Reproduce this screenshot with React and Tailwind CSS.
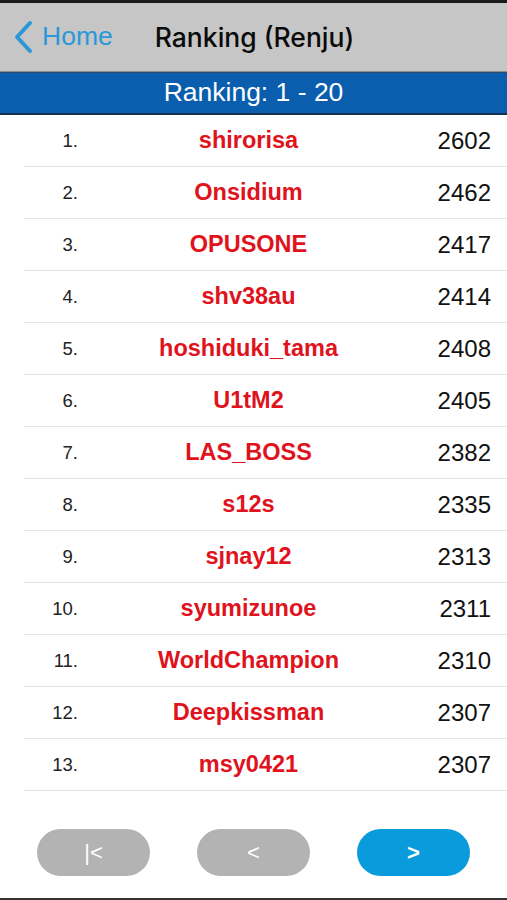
import React from 'react';

const rows = [
  ['1.', 'shirorisa', 2602],
  ['2.', 'Onsidium', 2462],
  ['3.', 'OPUSONE', 2417],
  ['4.', 'shv38au', 2414],
  ['5.', 'hoshiduki_tama', 2408],
  ['6.', 'U1tM2', 2405],
  ['7.', 'LAS_BOSS', 2382],
  ['8.', 's12s', 2335],
  ['9.', 'sjnay12', 2313],
  ['10.', 'syumizunoe', 2311],
  ['11.', 'WorldChampion', 2310],
  ['12.', 'Deepkissman', 2307],
  ['13.', 'msy0421', 2307],
];

const App = () => {
  return (
    <div className="w-[507px] h-[900px] flex flex-col bg-white font-['Liberation_Sans',Arial,sans-serif] overflow-hidden">
      {/* Top bar */}
      <div className="h-[3px] bg-[#1a1a1a]" />
      <div className="h-[69px] bg-[#c6c6c6] border-b border-[#8a8a8a] relative flex items-center justify-center">
        <div className="absolute left-[12px] top-0 h-full flex items-center gap-[6px] text-[#2a98d8]">
          <svg width="24" height="34" viewBox="0 0 24 34">
            <path d="M18 3 L5 17 L18 31" fill="none" stroke="#2a98d8" strokeWidth="4" strokeLinecap="round" strokeLinejoin="round" />
          </svg>
          <span className="text-[26.5px]">Home</span>
        </div>
        <span className="ml-[2px] pt-[1px] text-[26.5px] text-[#0a0a0a] font-medium font-['Inter',sans-serif]">Ranking (Renju)</span>
      </div>

      {/* Page range */}
      <div className="h-[43px] bg-[#0a5ead] border-t border-[#2c4a6a] border-b-2 border-b-[#12304f] flex items-center justify-center">
        <span className="text-white text-[26.5px]">Ranking: 1 - 20</span>
      </div>

      {/* List */}
      <div className="flex flex-col">
        {rows.map(([rank, name, score]) => (
          <div key={rank} className="h-[52px] ml-[24px] border-b border-[#e4e4e4] flex items-center">
            <span className="w-[54px] text-right text-[18.5px] text-[#222]">{rank}</span>
            <span className="flex-1 text-center text-[23.5px] font-bold text-[#e0121c]">{name}</span>
            <span className="w-[88px] pr-[16px] text-right text-[24px] text-[#111]">{score}</span>
          </div>
        ))}
      </div>

      {/* Paging buttons */}
      <div className="flex-1 flex items-start gap-[47px] px-[37px] pt-[38px]">
        <button className="w-[113px] h-[47px] rounded-full bg-[#b3b3b3] text-white text-[22px]">|&lt;</button>
        <button className="w-[113px] h-[47px] rounded-full bg-[#b3b3b3] text-white text-[22px]">&lt;</button>
        <button className="w-[113px] h-[47px] rounded-full bg-[#0a9bdc] text-white text-[22px] font-bold">&gt;</button>
      </div>
      <div className="h-[2px] bg-[#333]" />
    </div>
  );
};

export default App;
